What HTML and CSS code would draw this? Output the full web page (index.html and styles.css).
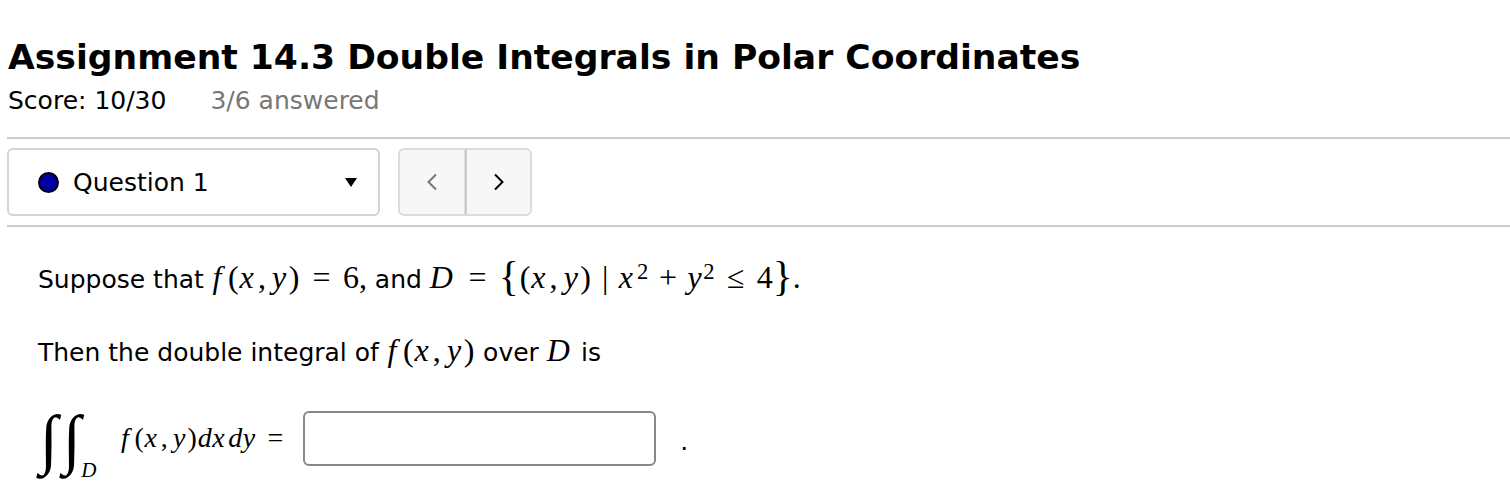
FILE: index.html
```html
<!DOCTYPE html>
<html>
<head>
<meta charset="utf-8">
<link rel="stylesheet" href="styles.css">
</head>
<body>
<header class="head">
  <h1 class="title">Assignment 14.3 Double Integrals in Polar Coordinates</h1>
  <div class="scoreline"><span class="score">Score: 10/30</span><span class="answered">3/6 answered</span></div>
</header>
<nav class="qnav">
  <div class="select">
    <span class="dot"></span>
    <span class="qlabel">Question 1</span>
    <svg class="caret" width="12" height="9" viewBox="0 0 12 9"><path d="M0 0 H12 L6 9 Z" fill="#000"/></svg>
  </div>
  <div class="arrows">
    <button class="arrow prev" type="button"><svg width="12" height="18" viewBox="0 0 12 18"><path d="M10 1.5 L2.5 9 L10 16.5" fill="none" stroke="#777" stroke-width="2"/></svg></button>
    <button class="arrow next" type="button"><svg width="12" height="18" viewBox="0 0 12 18"><path d="M2 1.5 L9.5 9 L2 16.5" fill="none" stroke="#000" stroke-width="2"/></svg></button>
  </div>
</nav>
<main class="question">
  <p class="line">Suppose that <span class="m"><i class="f">f</i><span class="p">(</span><i class="x">x</i>,<span class="th"></span><i class="y">y</i><span class="p">)</span><span class="rel">=</span>6,</span> and <span class="m"><i class="D">D</i><span class="rel">=</span><span class="big">{</span><span class="p">(</span><i class="x">x</i>,<span class="th"></span><i class="y">y</i><span class="p">)</span><span class="bar">|</span><i class="x">x</i><sup>2</sup><span class="bin">+</span><i class="y">y</i><sup>2</sup><span class="rel">≤</span>4<span class="big">}</span>.</span></p>
  <p class="line">Then the double integral of <span class="m"><i class="f">f</i><span class="p">(</span><i class="x">x</i>,<span class="th"></span><i class="y">y</i><span class="p">)</span></span> over <span class="m"><i class="D">D</i></span> is</p>
  <div class="answer">
    <span class="m integral"><span class="int">∫</span><span class="int">∫</span><sub class="dsub"><i>D</i></sub><span class="integrand"><i class="f">f</i><span class="p">(</span><i class="x">x</i>,<span class="th"></span><i class="y">y</i><span class="p">)</span><i class="d">d</i><i class="x">x</i><i class="d">d</i><i class="y">y</i></span><span class="rel">=</span></span>
    <input class="box" type="text">
    <span class="period">.</span>
  </div>
</main>
</body>
</html>
```
FILE: styles.css
```css
html, body {
  margin: 0;
  padding: 0;
  background: #fff;
}
body {
  font-family: "DejaVu Sans", Verdana, sans-serif;
  color: #000;
  padding: 0 0 0 7px;
  min-height: 487px;
  box-sizing: border-box;
}
.head {
  padding: 35px 0 0 1px;
}
.title {
  font-size: 34.6px;
  font-weight: bold;
  margin: 0;
  line-height: 44px;
}
.scoreline {
  font-size: 25px;
  line-height: 30px;
  margin-top: 7px;
  display: flex;
  gap: 44px;
}
.answered {
  color: #777;
}
.qnav {
  margin-top: 21px;
  border-top: 2px solid #ccc;
  border-bottom: 2px solid #ccc;
  padding: 9px 0 9px 0;
  display: flex;
  gap: 18px;
}
.select {
  width: 319px;
  height: 64px;
  border: 2px solid #d3d3d3;
  border-radius: 6px;
  display: flex;
  align-items: center;
  padding: 0 21px 0 29px;
}
.dot {
  width: 17px;
  height: 17px;
  border: 2px solid #000;
  border-radius: 50%;
  background: #0000a4;
  flex: none;
}
.qlabel {
  font-size: 25px;
  margin-left: 14px;
  flex: 1;
}
.caret {
  display: block;
}
.arrows {
  display: flex;
  height: 68px;
}
.arrow {
  width: 67px;
  height: 68px;
  background: #f7f7f7;
  border: 2px solid #dcdcdc;
  display: flex;
  align-items: center;
  justify-content: center;
  padding: 0;
  margin: 0;
}
.arrow.prev {
  border-radius: 6px 0 0 6px;
  border-right: 1px solid #dcdcdc;
}
.arrow.next {
  border-radius: 0 6px 6px 0;
  border-left: 2px solid #ccc;
}
.question {
  padding: 0 0 12px 31px;
}
.line {
  font-size: 25px;
  margin: 0;
  line-height: 30px;
}
.line:first-child {
  margin-top: 35px;
}
.line + .line {
  margin-top: 40px;
}
.m {
  font-family: "Liberation Serif", "DejaVu Serif", serif;
  font-size: 32px;
  white-space: nowrap;
}
.m i {
  font-style: italic;
}
.m i.f {
  padding: 0 0.18em 0 0.02em;
}
.m i.x {
  padding-right: 0.13em;
}
.m i.y {
  padding-right: 0.05em;
}
.m i.d {
  padding-right: 0.02em;
}
.m i.D {
  padding-right: 0.1em;
}
.p {
  padding: 0 0.028em;
}
.th {
  display: inline-block;
  width: 0.19em;
}
.m sup {
  font-size: 0.707em;
  vertical-align: 0.38em;
  line-height: 0;
}
.rel {
  margin: 0 0.385em;
}
.bin {
  margin: 0 0.33em;
}
.bar {
  margin: 0 0.32em;
}
.big {
  font-size: 1.3em;
  line-height: 0;
  vertical-align: -0.06em;
}
.answer {
  margin-top: 35px;
  height: 70px;
  display: flex;
  align-items: center;
}
.integral {
  display: block;
  line-height: 40px;
  height: 40px;
  font-size: 28px;
}
.int {
  font-size: 66px;
  line-height: 0;
  vertical-align: -14px;
  margin-right: 5px;
}
.int:first-child {
  margin-left: 2px;
}
.dsub {
  font-size: 21px;
  line-height: 0;
  vertical-align: -30px;
  margin-left: -5px;
}
.integrand {
  margin-left: 24px;
}
.integral .rel {
  margin-right: 0;
}
.box {
  width: 353px;
  height: 55px;
  box-sizing: border-box;
  border: 2px solid #888;
  border-radius: 6px;
  margin-left: 20px;
  background: #fff;
}
.period {
  font-size: 25px;
  margin-left: 24px;
  margin-top: 6px;
}
```
